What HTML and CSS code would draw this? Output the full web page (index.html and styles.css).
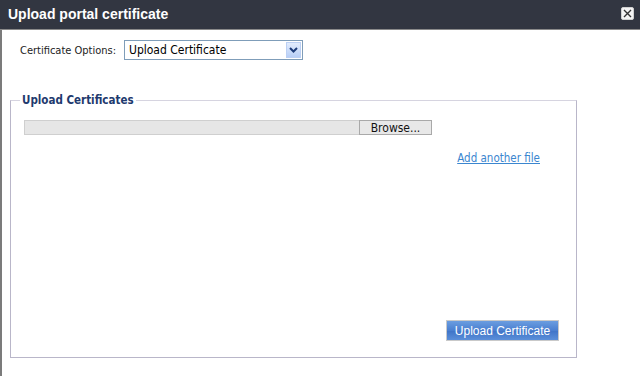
FILE: index.html
```html
<!DOCTYPE html>
<html lang="en">
<head>
    <meta charset="UTF-8">
    <title>Upload portal certificate</title>
    <link rel="stylesheet" href="styles.css">
</head>
<body>
    <div class="dialog">
        <div class="titlebar">
            <span class="title">Upload portal certificate</span>
            <button class="close" title="Close">
                <svg width="9" height="9" viewBox="0 0 9 9"><path d="M1 1L8 8M8 1L1 8" stroke="#333" stroke-width="1.4"/></svg>
            </button>
        </div>
        <div class="content">
            <div class="options-row">
                <label class="options-label">Certificate Options:</label>
                <div class="select">
                    <span class="select-value">Upload Certificate</span>
                    <span class="select-arrow">
                        <svg width="9" height="6" viewBox="0 0 9 6"><path d="M1 1L4.5 4.5L8 1" fill="none" stroke="#1d3c7a" stroke-width="2"/></svg>
                    </span>
                </div>
            </div>
            <fieldset class="uploads">
                <legend>Upload Certificates</legend>
                <div class="file-row">
                    <div class="file-path"></div>
                    <button class="browse">Browse...</button>
                </div>
                <div class="link-row">
                    <a href="#" class="add-link">Add another file</a>
                </div>
                <div class="submit-row">
                    <button class="submit">Upload Certificate</button>
                </div>
            </fieldset>
        </div>
    </div>
</body>
</html>
```

FILE: styles.css
```css
body {
    margin: 0;
    font-family: Tahoma, "DejaVu Sans", "Liberation Sans", sans-serif;
    font-size: 12px;
    background-color: #ffffff;
    color: #222;
}

.dialog {
    width: 640px;
    height: 376px;
    border-left: 2px solid #7b7b7b;
    box-sizing: border-box;
}

.titlebar {
    height: 29px;
    background-color: #323641;
    border-bottom: 1px solid #8a8a8a;
    display: flex;
    align-items: center;
    justify-content: space-between;
    padding: 0 6px 0 6px;
    margin-left: -2px;
}

.title {
    color: #ffffff;
    font-family: "Liberation Sans", Arial, sans-serif;
    font-weight: bold;
    font-size: 14px;
    padding-left: 2px;
    margin-top: -2px;
}

.close {
    width: 13px;
    height: 13px;
    padding: 0;
    border: 1px solid #d0d0d0;
    border-radius: 2px;
    background-color: #f4f4f4;
    display: flex;
    align-items: center;
    justify-content: center;
    margin-top: -2px;
    margin-right: 0;
}

.content {
    padding: 9px 0 0 8px;
}

.options-row {
    display: flex;
    align-items: center;
    padding-left: 10px;
    margin-top: 1px;
}

.options-label {
    font-family: "DejaVu Sans Condensed", sans-serif;
    font-size: 11px;
    color: #222;
    width: 104px;
}

.select {
    width: 177px;
    height: 18px;
    border: 1px solid #7f9db9;
    display: flex;
    align-items: center;
    justify-content: space-between;
}

.select-value {
    font-family: "DejaVu Sans Condensed", sans-serif;
    font-size: 12px;
    padding-left: 4px;
    color: #000;
}

.select-arrow {
    width: 15px;
    height: 16px;
    margin-right: 1px;
    background: linear-gradient(#e2ecfd, #b8cff7);
    border: 1px solid #bcd0f4;
    box-sizing: border-box;
    display: flex;
    align-items: center;
    justify-content: center;
}

.uploads {
    margin: 33px 0 0 0;
    width: 567px;
    height: 265px;
    box-sizing: border-box;
    border: 1px solid #b9b6c9;
    border-top-color: #d6d4e0;
    padding: 13px 13px 0 13px;
    display: flex;
    flex-direction: column;
}

.uploads legend {
    font-family: "DejaVu Sans Condensed", sans-serif;
    font-weight: bold;
    font-size: 11.5px;
    color: #1e3a6e;
    padding: 0 2px;
    margin-left: -4px;
}

.file-row {
    display: flex;
    height: 15px;
}

.file-path {
    width: 334px;
    background-color: #e6e6e6;
    border: 1px solid #cfcfcf;
    border-right: none;
}

.browse {
    width: 73px;
    height: 15px;
    padding: 0;
    font-family: "DejaVu Sans Condensed", sans-serif;
    font-size: 12px;
    line-height: 12px;
    color: #111;
    background-color: #e8e8e8;
    border: 1px solid #a9a9a9;
}

.link-row {
    display: flex;
    justify-content: flex-end;
    padding: 16px 23px 0 0;
}

.add-link {
    font-family: "DejaVu Sans Condensed", sans-serif;
    font-size: 11.5px;
    color: #3b86cf;
}

.submit-row {
    margin-top: auto;
    display: flex;
    justify-content: flex-end;
    padding: 0 4px 16px 0;
}

.submit {
    width: 113px;
    height: 21px;
    padding: 0;
    font-family: "Liberation Sans", Arial, sans-serif;
    font-size: 12px;
    color: #ffffff;
    border: 1px solid #c9c9c9;
    background: linear-gradient(#6b9de0, #4a7fd0 50%, #3f74c8 52%, #5b8fd9);
}
```
